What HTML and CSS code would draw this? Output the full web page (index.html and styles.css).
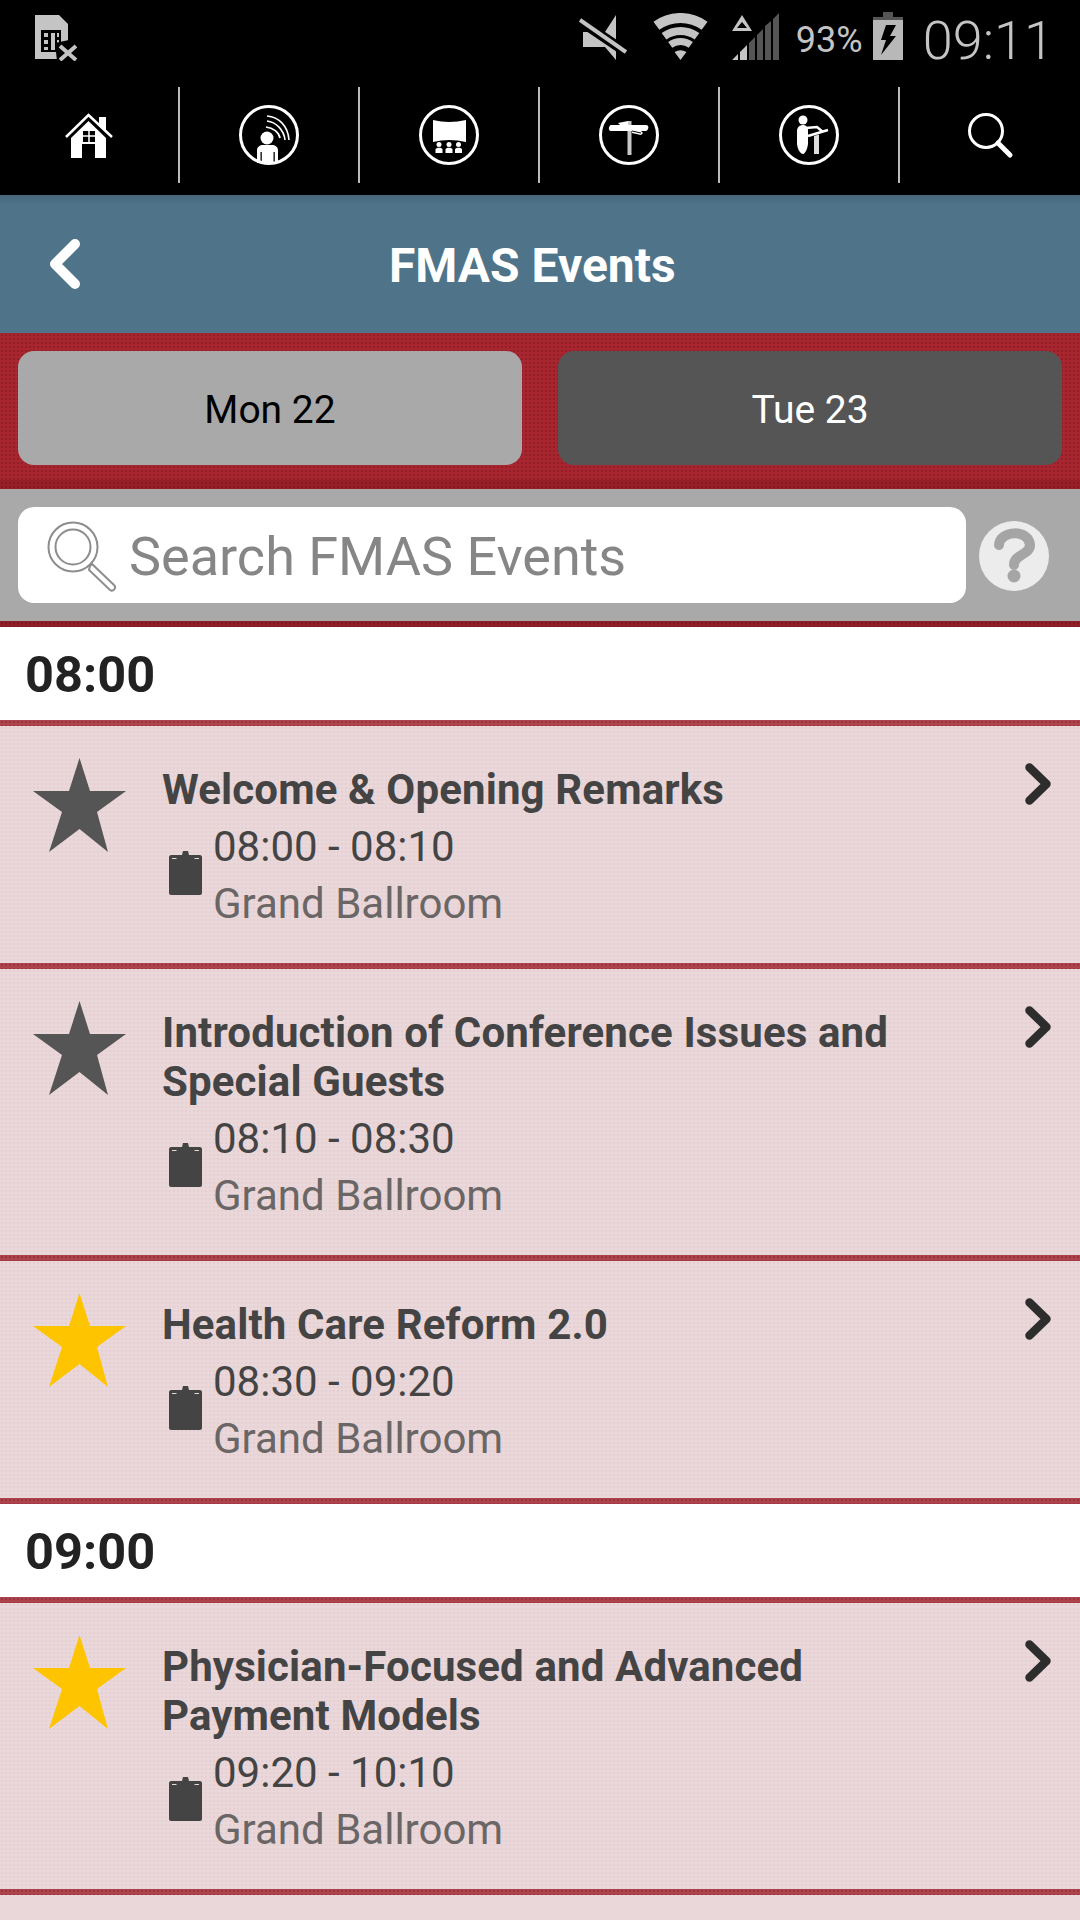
FILE: index.html
```html
<!DOCTYPE html>
<html lang="en">
<head>
<meta charset="utf-8">
<title>FMAS Events</title>
<link rel="stylesheet" href="styles.css">
</head>
<body>
<div class="phone">
  <header class="statusbar">
    <svg class="sim" viewBox="0 0 44 46"><path fill="#c4c4c4" d="M0 0H24L33 9V44H0Z"/><path fill="#000" d="M6 15H26V37H6Z"/><path fill="#c4c4c4" d="M9 18H13V22H9ZM9 25H13V29H9ZM9 32H13V35H9ZM16 18H20V35H16ZM22 18H24V22H22ZM22 25H24V29H22Z"/><path fill="#000" d="M20 28L34 25L44 34V46H22Z"/><path stroke="#c4c4c4" stroke-width="4" d="M25 31L41 45M41 31L25 45" fill="none"/></svg>
    <div class="status-right">
      <svg class="mute" viewBox="0 0 48 45"><path fill="#c4c4c4" d="M4 17H26L37 0V45L26 32H4Z"/><path stroke="#000" stroke-width="10" d="M-2 4L50 39"/><path stroke="#c4c4c4" stroke-width="4" d="M1 5L47 37"/></svg>
      <svg class="wifi" viewBox="0 0 55 48"><g fill="none" stroke="#c4c4c4"><path stroke-width="10" d="M3.400 12.800A41 41 0 0 1 51.600 12.800"/><path stroke-width="8" d="M11 23.300A28 28 0 0 1 44 23.300"/><path stroke-width="7" d="M17.200 31.800A17.500 17.500 0 0 1 37.800 31.800"/></g><path fill="#c4c4c4" d="M27.500 47L21.600 38.900Q27.500 35.500 33.400 38.900Z"/></svg>
      <svg class="signal" viewBox="0 0 47 48"><path fill="#c4c4c4" fill-rule="evenodd" d="M10 2L20 18H0ZM10 9L5 15H15Z"/><path fill="#c4c4c4" d="M0 47L6 41V47ZM8 47V39L15 32V47Z"/><path fill="#555" d="M17 47V30L23 24V47ZM25 47V22L31 16V47ZM33 47V13L39 8V47ZM41 47V6L47 0V47Z"/></svg>
      <span class="battery-pct">93%</span>
      <svg class="battery" viewBox="0 0 30 48"><path fill="#555" d="M10 0H20V6H10Z"/><path fill="#555" d="M0 5H30V8H0Z"/><path fill="#b8b8b8" d="M0 8H30V48H0Z"/><path fill="#000" d="M13 13H23L17 24H23L8 43L13 28H8Z"/></svg>
      <span class="clock">09:11</span>
    </div>
  </header>

  <nav class="topnav">
    <a class="navcell">
      <svg class="navicon" viewBox="0 0 60 60"><path fill="#fff" d="M40 12H47V27L40 21Z"/><path fill="none" stroke="#fff" stroke-width="2.500" d="M7 32L29.500 10L53 32"/><path fill="#fff" fill-rule="evenodd" d="M29.500 16L47 33V53H36V39H23V53H12V33ZM24 26V37H36V26Z"/><path stroke="#fff" stroke-width="1.500" d="M30 26V37M24 31H36"/></svg>
    </a>
    <a class="navcell">
      <svg class="navicon" viewBox="0 0 60 60"><circle cx="30" cy="30" r="28.500" fill="none" stroke="#fff" stroke-width="3"/><g fill="none" stroke="#fff" stroke-width="1.600"><path d="M28 11C40 12 49 21 50 35"/><path d="M28 16C37 17 45 25 46 35"/><path d="M27 22C34 23 40 27 41 33"/></g><circle cx="28" cy="33" r="6.500" fill="#fff"/><path fill="#fff" fill-rule="evenodd" d="M18 58V45C18 42 21 40 24 40H33C36 40 39 42 39 45V58ZM21.500 47V58H22.800V47ZM34.500 47V58H35.800V47Z"/></svg>
    </a>
    <a class="navcell">
      <svg class="navicon" viewBox="0 0 60 60"><circle cx="30" cy="30" r="28.500" fill="none" stroke="#fff" stroke-width="3"/><path fill="#fff" d="M14 15Q30 19 47 15V37Q30 33 14 37Z"/><g fill="#fff"><circle cx="20" cy="39.500" r="2.500"/><path d="M16.500 48V44.500C16.500 42 23.500 42 23.500 44.500V48Z"/><circle cx="30" cy="39.500" r="2.500"/><path d="M26.500 48V44.500C26.500 42 33.500 42 33.500 44.500V48Z"/><circle cx="39.500" cy="39.500" r="2.500"/><path d="M36 48V44.500C36 42 43 42 43 44.500V48Z"/></g></svg>
    </a>
    <a class="navcell">
      <svg class="navicon" viewBox="0 0 60 60"><circle cx="30" cy="30" r="28.500" fill="none" stroke="#fff" stroke-width="3"/><path fill="#c8c8c8" d="M28.500 16H32.500V50H28.500Z"/><path fill="#fff" d="M12 20H47C49 20 50 22 49 24C48 26 47 26 46 26H12C10 26 9.500 24 10 22.500C10.500 21 11 20 12 20Z"/><path fill="#fff" d="M19 18L29 16V20H21ZM33 25H41L44 28L42 30L33 28Z"/><path stroke="#000" stroke-width="1" d="M33 26L42 28"/></svg>
    </a>
    <a class="navcell">
      <svg class="navicon" viewBox="0 0 60 60"><circle cx="30" cy="30" r="28.500" fill="none" stroke="#fff" stroke-width="3"/><circle cx="24" cy="15" r="4.500" fill="#fff"/><path fill="#fff" d="M18 26C18 22 21 20 24 20C27 20 29 22 29 26V38C29 43 26 49 24 49C21 49 18 43 18 38Z"/><path fill="none" stroke="#fff" stroke-width="2.500" d="M27 23L38 22L44 27"/><path stroke="#fff" stroke-width="2.500" d="M29 31L49 25"/><path fill="#ddd" d="M35 31L40 29.500V49H35Z"/></svg>
    </a>
    <a class="navcell">
      <svg class="navicon" viewBox="0 0 60 60"><circle cx="26" cy="26" r="16.500" fill="none" stroke="#fff" stroke-width="3"/><path stroke="#fff" stroke-width="5" stroke-linecap="round" d="M38 38L50 50"/></svg>
    </a>
  </nav>

  <div class="titlebar">
    <svg class="back" viewBox="0 0 32 50"><path d="M26 5L6 25L26 45" fill="none" stroke="#fff" stroke-width="10" stroke-linecap="round" stroke-linejoin="round"/></svg>
    <h1 class="page-title">FMAS Events</h1>
  </div>

  <div class="daytabs textured-red">
    <button class="daytab daytab-current">Mon 22</button>
    <button class="daytab daytab-other">Tue 23</button>
  </div>

  <div class="searchbar">
    <div class="searchbox">
      <svg class="search-glass" viewBox="0 0 72 72"><g fill="none" stroke="#8d8d8d"><circle cx="27" cy="27" r="24.500" stroke-width="2"/><circle cx="27" cy="27" r="17.500" stroke-width="2"/><path stroke-width="2" d="M44 46L46 44L68 65C71 68 67 72 64 70L43 50Z" fill="#fff"/></g></svg>
      <span class="search-placeholder">Search FMAS Events</span>
    </div>
    <svg class="help" viewBox="0 0 72 72"><circle cx="36" cy="36" r="35" fill="#ececec"/><path fill="none" stroke="#a5a5a5" stroke-width="10" stroke-linecap="round" d="M21 25C22 10 51 9 52 25C52 35 36 34 36 45"/><circle cx="36" cy="56" r="6.500" fill="#a5a5a5"/></svg>
  </div>

  <div class="rule rule-dark"></div>
  <section class="schedule">
    <h2 class="hour">08:00</h2>
    <div class="rule"></div>

    <article class="event">
      <svg class="star" viewBox="0 0 93 94"><path d="M46.500 0L57 33H93L64 54L75 94L46.500 71L16 94L29 54L0 33H36Z"/></svg>
      <div class="event-body">
        <h3 class="event-title">Welcome &amp; Opening Remarks</h3>
        <div class="event-meta">
          <svg class="clip" viewBox="0 0 33 45"><path d="M2 5H31C32 5 33 6 33 7V43C33 44 32 45 31 45H2C1 45 0 44 0 43V7C0 6 1 5 2 5Z"/><path d="M8 10L10 5H13L14 1H19L20 5H23L25 10Z"/><path class="clip-gap" d="M3 8.500H7.500M25.500 8.500H30"/></svg>
          <div class="event-when">
            <div class="event-time">08:00 - 08:10</div>
            <div class="event-room">Grand Ballroom</div>
          </div>
        </div>
      </div>
      <svg class="chevron" viewBox="0 0 26 42"><path d="M4.500 4.500L21.500 21L4.500 37.500"/></svg>
    </article>
    <div class="rule"></div>

    <article class="event">
      <svg class="star" viewBox="0 0 93 94"><path d="M46.500 0L57 33H93L64 54L75 94L46.500 71L16 94L29 54L0 33H36Z"/></svg>
      <div class="event-body">
        <h3 class="event-title">Introduction of Conference Issues and Special Guests</h3>
        <div class="event-meta">
          <svg class="clip" viewBox="0 0 33 45"><path d="M2 5H31C32 5 33 6 33 7V43C33 44 32 45 31 45H2C1 45 0 44 0 43V7C0 6 1 5 2 5Z"/><path d="M8 10L10 5H13L14 1H19L20 5H23L25 10Z"/><path class="clip-gap" d="M3 8.500H7.500M25.500 8.500H30"/></svg>
          <div class="event-when">
            <div class="event-time">08:10 - 08:30</div>
            <div class="event-room">Grand Ballroom</div>
          </div>
        </div>
      </div>
      <svg class="chevron" viewBox="0 0 26 42"><path d="M4.500 4.500L21.500 21L4.500 37.500"/></svg>
    </article>
    <div class="rule"></div>

    <article class="event">
      <svg class="star star-on" viewBox="0 0 93 94"><path d="M46.500 0L57 33H93L64 54L75 94L46.500 71L16 94L29 54L0 33H36Z"/></svg>
      <div class="event-body">
        <h3 class="event-title">Health Care Reform 2.0</h3>
        <div class="event-meta">
          <svg class="clip" viewBox="0 0 33 45"><path d="M2 5H31C32 5 33 6 33 7V43C33 44 32 45 31 45H2C1 45 0 44 0 43V7C0 6 1 5 2 5Z"/><path d="M8 10L10 5H13L14 1H19L20 5H23L25 10Z"/><path class="clip-gap" d="M3 8.500H7.500M25.500 8.500H30"/></svg>
          <div class="event-when">
            <div class="event-time">08:30 - 09:20</div>
            <div class="event-room">Grand Ballroom</div>
          </div>
        </div>
      </div>
      <svg class="chevron" viewBox="0 0 26 42"><path d="M4.500 4.500L21.500 21L4.500 37.500"/></svg>
    </article>
    <div class="rule"></div>

    <h2 class="hour">09:00</h2>
    <div class="rule"></div>

    <article class="event">
      <svg class="star star-on" viewBox="0 0 93 94"><path d="M46.500 0L57 33H93L64 54L75 94L46.500 71L16 94L29 54L0 33H36Z"/></svg>
      <div class="event-body">
        <h3 class="event-title">Physician-Focused and Advanced Payment Models</h3>
        <div class="event-meta">
          <svg class="clip" viewBox="0 0 33 45"><path d="M2 5H31C32 5 33 6 33 7V43C33 44 32 45 31 45H2C1 45 0 44 0 43V7C0 6 1 5 2 5Z"/><path d="M8 10L10 5H13L14 1H19L20 5H23L25 10Z"/><path class="clip-gap" d="M3 8.500H7.500M25.500 8.500H30"/></svg>
          <div class="event-when">
            <div class="event-time">09:20 - 10:10</div>
            <div class="event-room">Grand Ballroom</div>
          </div>
        </div>
      </div>
      <svg class="chevron" viewBox="0 0 26 42"><path d="M4.500 4.500L21.500 21L4.500 37.500"/></svg>
    </article>
    <div class="rule"></div>
  </section>
</div>
</body>
</html>
```

FILE: styles.css
```css
* { box-sizing: border-box; }

html, body {
  margin: 0;
  padding: 0;
  background: #fff;
}

.phone {
  width: 1080px;
  height: 1920px;
  overflow: hidden;
  font-family: Roboto, "Liberation Sans", sans-serif;
  background: #ead7d9;
}

/* system status bar */
.statusbar {
  height: 86px;
  background: #000;
  display: flex;
  justify-content: space-between;
  align-items: flex-start;
  padding: 15px 26px 0 35px;
  color: #c4c4c4;
}

.sim { width: 44px; height: 46px; }

.status-right {
  display: flex;
  align-items: flex-start;
}

.mute { width: 48px; height: 45px; margin-right: 26px; }
.wifi { width: 55px; height: 48px; margin-top: -2px; margin-right: 24px; }
.signal { width: 47px; height: 48px; margin-top: -2px; margin-right: 17px; }

.battery-pct {
  font-size: 36px;
  line-height: 46px;
  width: 77px;
  padding-top: 2px;
}

.battery { width: 30px; height: 48px; margin-top: -3px; margin-right: 20px; }

.clock {
  font-size: 54px;
  font-weight: 300;
  line-height: 50px;
  padding-top: 1px;
}

/* app navigation */
.topnav {
  display: flex;
  height: 109px;
  padding-top: 1px;
  padding-bottom: 12px;
  background: #000;
}

.navcell {
  flex: 0 0 180px;
  display: flex;
  align-items: center;
  justify-content: center;
  border-right: 2px solid #bbb;
}

.navcell:last-child { border-right: 0; }

.navicon { width: 60px; height: 60px; }

/* screen title */
.titlebar {
  height: 138px;
  background: linear-gradient(#47677a 0, #4f7489 10px);
  display: flex;
  align-items: center;
  padding-left: 49px;
}

.back { width: 32px; height: 50px; }

.page-title {
  margin: 0 0 0 308px;
  padding-top: 2px;
  color: #fff;
  font-size: 48px;
  font-weight: 700;
}

/* day switcher */
.textured-red {
  background-color: #a7262f;
  background-image: radial-gradient(circle, #931e28 1px, transparent 1.2px);
  background-size: 4px 4px;
}

.daytabs {
  height: 156px;
  display: flex;
  gap: 36px;
  padding: 18px 18px 0;
  box-shadow: inset 0 -9px 0 rgba(60, 0, 0, .14);
}

.daytab {
  flex: 1;
  height: 114px;
  border: 0;
  border-radius: 16px;
  padding-top: 4px;
  font-family: inherit;
  font-size: 39px;
}

.daytab-current { background: #a9a9a9; color: #000; }
.daytab-other { background: #555; color: #fff; }

/* search field */
.searchbar {
  height: 132px;
  background: #a9a9a9;
  display: flex;
  align-items: center;
  padding: 0 30px 0 18px;
  justify-content: space-between;
}

.searchbox {
  width: 948px;
  height: 96px;
  border-radius: 16px;
  background: #fff;
  display: flex;
  align-items: center;
  padding-left: 28px;
}

.search-glass { width: 72px; height: 72px; margin-right: 11px; margin-top: 2px; }

.search-placeholder {
  padding-top: 3px;
  color: #868686;
  font-size: 54px;
}

.help { width: 72px; height: 72px; margin-top: 2px; filter: blur(.7px); }

/* schedule list */
.rule {
  height: 6px;
  background-color: #ad444d;
  background-image: radial-gradient(circle, #9a343e 1px, transparent 1.2px);
  background-size: 4px 4px;
}

.rule-dark {
  background-color: #8e1f29;
  background-image: radial-gradient(circle, #7a1722 1px, transparent 1.2px);
}

.hour {
  margin: 0;
  height: 93px;
  padding: 3px 0 0 25px;
  background: #fff;
  color: #222;
  font-size: 50.5px;
  font-weight: 700;
  line-height: 90px;
}

.event {
  display: flex;
  align-items: flex-start;
  padding: 0 29px 31px 33px;
  background-color: #ead7d9;
  background-image: radial-gradient(circle, #e5cfd2 1px, transparent 1.2px);
  background-size: 4px 4px;
}

.star {
  flex: 0 0 93px;
  height: 94px;
  margin-top: 32px;
  fill: #555;
}

.star-on { fill: #ffc400; }

.event-body {
  flex: 1;
  margin-left: 36px;
  padding: 39px 90px 0 0;
}

.event-title {
  margin: 0 0 4px;
  color: #444;
  font-size: 42px;
  font-weight: 700;
  letter-spacing: .13px;
  line-height: 49px;
}

.event-meta {
  display: flex;
  align-items: center;
  gap: 11px;
  padding-left: 7px;
}

.clip {
  flex: 0 0 33px;
  height: 45px;
  margin-bottom: 6px;
  fill: #444;
}

.clip-gap {
  fill: none;
  stroke: #ead7d9;
  stroke-width: 1;
}

.event-time,
.event-room {
  font-size: 42px;
  line-height: 57px;
}

.event-time { color: #444; }
.event-room { color: #6a6666; }

.chevron {
  flex: 0 0 26px;
  height: 42px;
  margin-top: 37px;
  fill: none;
  stroke: #2d2d2d;
  stroke-width: 8.5;
  stroke-linecap: round;
  stroke-linejoin: round;
}
```
